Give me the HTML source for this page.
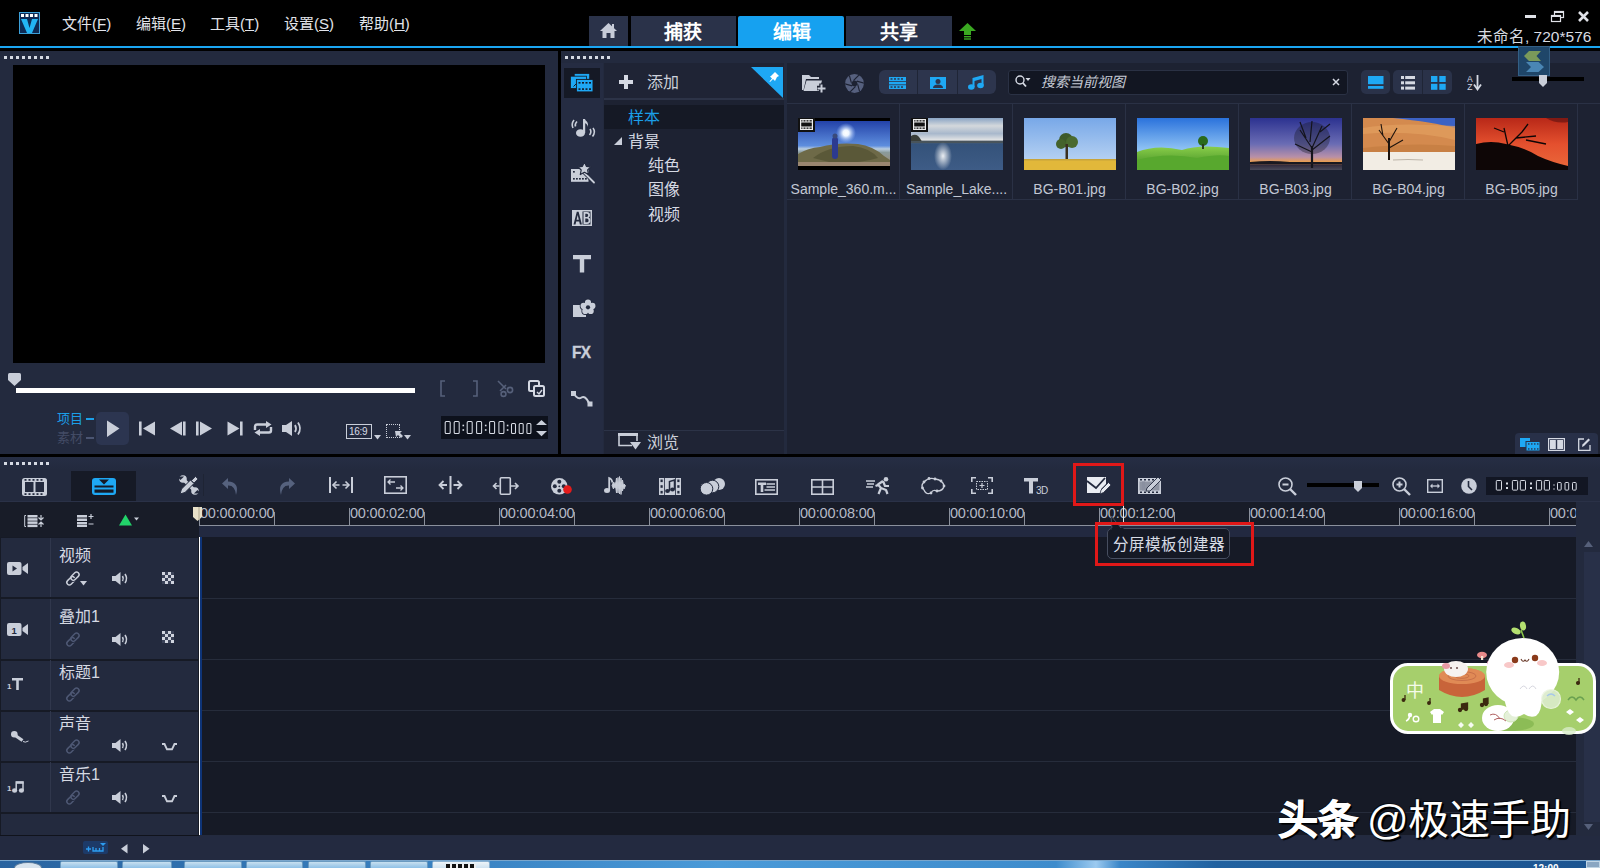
<!DOCTYPE html>
<html lang="zh-CN"><head><meta charset="utf-8">
<style>
*{margin:0;padding:0;box-sizing:border-box}
html,body{width:1600px;height:868px;overflow:hidden;background:#000;font-family:"Liberation Sans",sans-serif;color:#d5d9e4}
.a{position:absolute}
.t{position:absolute;white-space:nowrap;line-height:1}
svg{position:absolute;overflow:visible}
.ic{fill:#cdd2de}
</style></head><body>
<!-- ===== TOP BAR ===== -->
<div class="a" style="left:0;top:0;width:1600px;height:46px;background:#000"></div>
<!-- logo -->
<svg style="left:19px;top:12px" width="21" height="22" viewBox="0 0 21 22">
 <rect x="0.5" y="0.5" width="20" height="21" fill="#0d2a55" stroke="#3c9fd8" stroke-width="1"/>
 <rect x="2" y="2" width="3" height="3" fill="#fff"/><rect x="6.5" y="2" width="3" height="3" fill="#fff"/><rect x="11" y="2" width="3" height="3" fill="#fff"/><rect x="15.5" y="2" width="3" height="3" fill="#fff"/>
 <path d="M2 7 L8 7 L10.5 16 L13 7 L19 7 L13 21 L8 21 Z" fill="#22b4f4"/>
</svg>
<div class="t" style="left:62px;top:16px;font-size:15px;color:#e2e4ea">文件(<u>F</u>)</div>
<div class="t" style="left:136px;top:16px;font-size:15px;color:#e2e4ea">编辑(<u>E</u>)</div>
<div class="t" style="left:210px;top:16px;font-size:15px;color:#e2e4ea">工具(<u>T</u>)</div>
<div class="t" style="left:284px;top:16px;font-size:15px;color:#e2e4ea">设置(<u>S</u>)</div>
<div class="t" style="left:359px;top:16px;font-size:15px;color:#e2e4ea">帮助(<u>H</u>)</div>
<!-- tabs -->
<div class="a" style="left:589px;top:16px;width:39px;height:30px;background:#2a3249"></div>
<svg style="left:600px;top:23px" width="17" height="15" viewBox="0 0 17 15"><path d="M8.5 0 L17 8 L14.5 8 L14.5 15 L10.5 15 L10.5 10 L6.5 10 L6.5 15 L2.5 15 L2.5 8 L0 8 Z" fill="#c7ccd8"/><rect x="12" y="1" width="2" height="4" fill="#c7ccd8"/></svg>
<div class="a" style="left:631px;top:16px;width:105px;height:30px;background:#2a3249"></div>
<div class="t" style="left:664px;top:23px;font-size:19px;font-weight:bold;color:#fff">捕获</div>
<div class="a" style="left:738px;top:16px;width:106px;height:32px;background:#16a1f0;border-radius:2px 2px 0 0"></div>
<div class="t" style="left:773px;top:23px;font-size:19px;font-weight:bold;color:#fff">编辑</div>
<div class="a" style="left:846px;top:16px;width:106px;height:30px;background:#2a3249"></div>
<div class="t" style="left:880px;top:23px;font-size:19px;font-weight:bold;color:#fff">共享</div>
<svg style="left:959px;top:23px" width="17" height="17" viewBox="0 0 17 17"><path d="M8.5 0 L17 8 L12 8 L12 12 L5 12 L5 8 L0 8 Z" fill="#3aa821"/><rect x="5" y="13" width="7" height="1.4" fill="#3aa821"/><rect x="5" y="15.3" width="7" height="1.4" fill="#3aa821"/></svg>
<!-- window controls -->
<div class="a" style="left:1525px;top:15px;width:11px;height:3px;background:#e0e2e8"></div>
<svg style="left:1551px;top:11px" width="13" height="11" viewBox="0 0 13 11"><rect x="3.5" y="0.5" width="9" height="6" fill="none" stroke="#e0e2e8" stroke-width="1.2"/><rect x="3" y="0" width="10" height="2" fill="#e0e2e8"/><rect x="0.5" y="4.5" width="9" height="6" fill="#000" stroke="#e0e2e8" stroke-width="1.2"/><rect x="0" y="4" width="10" height="2" fill="#e0e2e8"/></svg>
<svg style="left:1578px;top:11px" width="11" height="11" viewBox="0 0 11 11"><path d="M1 1 L10 10 M10 1 L1 10" stroke="#e0e2e8" stroke-width="2.6"/></svg>
<div class="t" style="left:1477px;top:29px;font-size:15.5px;color:#d8dbe2">未命名, 720*576</div>
<div class="a" style="left:0;top:46px;width:1600px;height:2px;background:#1ba6f2"></div>

<!-- ===== PREVIEW PANEL ===== -->
<div class="a" style="left:0;top:51px;width:558px;height:403px;background:#232a3e"></div>
<div class="a" style="left:4px;top:56px;width:46px;height:3px;background:repeating-linear-gradient(90deg,#d6dae3 0 3px,transparent 3px 6px)"></div>
<div class="a" style="left:13px;top:65px;width:532px;height:298px;background:#000"></div>


<!-- scrubber -->
<svg style="left:8px;top:373px" width="13" height="13" viewBox="0 0 13 13"><path d="M1.5 0 H11.5 Q13 0 13 1.5 V7 L6.5 13 L0 7 V1.5 Q0 0 1.5 0 Z" fill="#c9ced9"/></svg>
<div class="a" style="left:16px;top:388px;width:399px;height:5px;background:#fff"></div>
<svg style="left:440px;top:380px" width="110" height="17" viewBox="0 0 110 17">
 <path d="M5 1 H1 V16 H5" fill="none" stroke="#56607a" stroke-width="1.6"/>
 <path d="M33 1 H37 V16 H33" fill="none" stroke="#56607a" stroke-width="1.6"/>
 <g fill="none" stroke="#56607a" stroke-width="1.6"><path d="M58 1 L66 9 M66 5 L60 11"/><circle cx="70" cy="10" r="2.6"/><circle cx="63.5" cy="14" r="2.4"/></g>
 <g fill="none" stroke="#d5d9e3" stroke-width="2"><rect x="89" y="1" width="10" height="10" rx="1.5"/><rect x="94" y="6" width="10" height="10" rx="1.5" fill="#232a3e"/></g>
 <path d="M97 12 L99 14 L102 10" stroke="#d5d9e3" stroke-width="1.4" fill="none"/>
</svg>
<!-- project/clip -->
<div class="t" style="left:57px;top:412px;font-size:13px;color:#1b9fe8">项目</div>
<div class="a" style="left:86px;top:418px;width:8px;height:2px;background:#1b9fe8"></div>
<div class="t" style="left:57px;top:431px;font-size:13px;color:#434c66">素材</div>
<div class="a" style="left:86px;top:437px;width:8px;height:2px;background:#4b5572"></div>
<div class="a" style="left:96px;top:412px;width:33px;height:33px;background:#2c3550;border-radius:5px"></div>
<svg style="left:96px;top:412px" width="240" height="33" viewBox="0 0 240 33">
 <path d="M11 8.5 L23.5 16.5 L11 25 Z" fill="#c9ced9"/>
 <rect x="43" y="9.5" width="2.6" height="14" fill="#c9ced9"/><path d="M59 9.5 V23.5 L47 16.5 Z" fill="#c9ced9"/>
 <path d="M86 9.5 V23.5 L74 16.5 Z" fill="#c9ced9"/><rect x="87" y="9.5" width="2.6" height="14" fill="#c9ced9"/>
 <rect x="100" y="9.5" width="2.6" height="14" fill="#c9ced9"/><path d="M104 9.5 V23.5 L116 16.5 Z" fill="#c9ced9"/>
 <path d="M131.5 9.5 V23.5 L143.5 16.5 Z" fill="#c9ced9"/><rect x="144" y="9.5" width="2.6" height="14" fill="#c9ced9"/>
 <g fill="none" stroke="#c9ced9" stroke-width="2.4"><path d="M159 18 V14.5 Q159 12.5 161 12.5 H172"/><path d="M175 15 V18.5 Q175 20.5 173 20.5 H162"/></g>
 <path d="M170 9 L175.5 12.5 L170 16 Z" fill="#c9ced9"/><path d="M164 17 L158.5 20.5 L164 24 Z" fill="#c9ced9"/>
 <path d="M186 13 H190 L196 9 V24 L190 20 H186 Z" fill="#c9ced9"/>
 <g fill="none" stroke="#c9ced9" stroke-width="1.8"><path d="M199 13 Q201 16.5 199 20"/><path d="M202 10.5 Q206 16.5 202 22.5"/></g>
</svg>
<!-- 16:9 -->
<div class="a" style="left:346px;top:424px;width:26px;height:15px;border:1.3px solid #c9ced9"></div>
<div class="t" style="left:349px;top:427px;font-size:10px;color:#d8dce5;letter-spacing:-0.3px">16:9</div>
<svg style="left:374px;top:435px" width="8" height="5"><path d="M0 0 H7 L3.5 4.5 Z" fill="#c9ced9"/></svg>
<div class="a" style="left:386px;top:424px;width:14px;height:14px;border:1.2px dotted #c9ced9"></div>
<svg style="left:394px;top:430px" width="9" height="10" viewBox="0 0 9 10"><path d="M1 1 L8 1 L6 3 L9 6 L7 8 L4 5 L2 7 Z" fill="#c9ced9"/></svg>
<svg style="left:404px;top:435px" width="8" height="5"><path d="M0 0 H7 L3.5 4.5 Z" fill="#c9ced9"/></svg>
<!-- timecode -->
<div class="a" style="left:441px;top:416px;width:107px;height:23px;background:#0d111c"></div>
<svg style="left:0;top:0" width="1600" height="868"><rect x="445.20" y="421.40" width="5.00" height="12.00" rx="1" fill="none" stroke="#d8dce5" stroke-width="1.05"/><rect x="454.20" y="421.40" width="5.00" height="12.00" rx="1" fill="none" stroke="#d8dce5" stroke-width="1.05"/><rect x="467.20" y="421.40" width="5.00" height="12.00" rx="1" fill="none" stroke="#d8dce5" stroke-width="1.05"/><rect x="476.60" y="421.40" width="5.00" height="12.00" rx="1" fill="none" stroke="#d8dce5" stroke-width="1.05"/><rect x="489.60" y="421.40" width="5.00" height="12.00" rx="1" fill="none" stroke="#d8dce5" stroke-width="1.05"/><rect x="498.90" y="421.40" width="5.00" height="12.00" rx="1" fill="none" stroke="#d8dce5" stroke-width="1.05"/><rect x="462.50" y="424.70" width="1.60" height="1.60" fill="#d8dce5"/><rect x="462.50" y="429.20" width="1.60" height="1.60" fill="#d8dce5"/><rect x="484.90" y="424.70" width="1.60" height="1.60" fill="#d8dce5"/><rect x="484.90" y="429.20" width="1.60" height="1.60" fill="#d8dce5"/><rect x="506.80" y="424.70" width="1.60" height="1.60" fill="#d8dce5"/><rect x="506.80" y="429.20" width="1.60" height="1.60" fill="#d8dce5"/><rect x="511.50" y="423.50" width="4.00" height="9.90" rx="1" fill="none" stroke="#d8dce5" stroke-width="1.05"/><rect x="519.20" y="423.50" width="4.00" height="9.90" rx="1" fill="none" stroke="#d8dce5" stroke-width="1.05"/><rect x="526.90" y="423.50" width="4.00" height="9.90" rx="1" fill="none" stroke="#d8dce5" stroke-width="1.05"/></svg>
<svg style="left:536px;top:420px" width="11" height="17" viewBox="0 0 11 17"><path d="M0 5 L5.5 0 L11 5 Z M0 11 H11 L5.5 16.3 Z" fill="#c9ced9"/></svg>

<!-- ===== LIBRARY PANEL ===== -->
<div class="a" style="left:561px;top:51px;width:1039px;height:403px;background:#232a3e"></div>
<div class="a" style="left:565px;top:56px;width:46px;height:3px;background:repeating-linear-gradient(90deg,#d6dae3 0 3px,transparent 3px 6px)"></div>


<div class="a" style="left:561px;top:63px;width:42px;height:391px;background:#252c42"></div>
<div class="a" style="left:564px;top:68px;width:36px;height:30px;background:#151925"></div>
<!-- library icon -->
<svg style="left:570px;top:73px" width="24" height="20" viewBox="0 0 24 20">
 <rect x="4.7" y="0.9" width="14.5" height="5" fill="#1ea8f4"/>
 <rect x="0.4" y="3.2" width="16" height="12.3" fill="#1ea8f4" stroke="#151925" stroke-width="0.8"/>
 <path d="M3.5 13.5 L6.5 10.5" stroke="#151925" stroke-width="1"/>
 <rect x="6.4" y="6.4" width="16.6" height="12.5" fill="#1ea8f4" stroke="#151925" stroke-width="0.9"/>
 <g fill="#151925"><rect x="8.5" y="9" width="2" height="1.6"/><rect x="12" y="9" width="2" height="1.6"/><rect x="15.5" y="9" width="2" height="1.6"/><rect x="19" y="9" width="2" height="1.6"/>
 <rect x="8.5" y="15.3" width="2" height="1.6"/><rect x="12" y="15.3" width="2" height="1.6"/><rect x="15.5" y="15.3" width="2" height="1.6"/><rect x="19" y="15.3" width="2" height="1.6"/></g>
</svg>
<!-- audio -->
<svg style="left:572px;top:118px" width="23" height="19" viewBox="0 0 23 19">
 <ellipse cx="8.5" cy="15" rx="4.5" ry="3.8" fill="#c9ced9"/><rect x="11" y="1" width="2.2" height="14" fill="#c9ced9"/><path d="M11 1 Q17 3 16 9 Q15 5 12 5 Z" fill="#c9ced9"/>
 <g fill="none" stroke="#c9ced9" stroke-width="1.6"><path d="M5 3.5 Q2.5 6 3.5 8.5"/><path d="M2 2 Q-1 6 1 10"/><path d="M18 11 Q20 14 17.5 17"/><path d="M21 10 Q24 14 20.5 18.5"/></g>
</svg>
<!-- magic film -->
<svg style="left:571px;top:162px" width="24" height="21" viewBox="0 0 24 21">
 <rect x="0" y="7" width="17.5" height="12.8" fill="#c9ced9"/>
 <g fill="#232a3e"><rect x="2" y="9" width="1.8" height="1.6"/><rect x="2" y="16" width="1.8" height="1.6"/><rect x="5" y="16" width="1.8" height="1.6"/><rect x="8" y="16" width="1.8" height="1.6"/><rect x="11" y="16" width="1.8" height="1.6"/><rect x="14" y="16" width="1.8" height="1.6"/></g>
 <path d="M12.5 10 L23 20.5" stroke="#232a3e" stroke-width="3.6"/>
 <path d="M12.5 10 L23 20.5" stroke="#c9ced9" stroke-width="1.8" stroke-linecap="round"/>
 <path d="M13.4 0 L15.4 4.3 L20 4.8 L16.6 8 L17.5 12.5 L13.4 10.3 L9.3 12.5 L10.2 8 L6.8 4.8 L11.4 4.3 Z" fill="#c9ced9" stroke="#232a3e" stroke-width="1.2" stroke-linejoin="round"/>
</svg>
<!-- AB -->
<svg style="left:572px;top:210px" width="20" height="16" viewBox="0 0 20 16">
 <rect x="0" y="0" width="20" height="16" fill="#c9ced9"/>
 <rect x="10.5" y="1.5" width="8" height="13" fill="#232a3e"/>
 <path d="M1.5 14.5 L4.8 1.8 H6.6 L9.9 14.5 H7.9 L7.2 11.5 H4.2 L3.5 14.5 Z M4.6 9.8 H6.8 L5.7 5 Z" fill="#232a3e" fill-rule="evenodd"/>
 <path d="M11.5 2 H15 Q18 2 18 5.2 Q18 7 16.6 7.6 Q18.4 8.3 18.4 10.6 Q18.4 14 15 14 H11.5 Z M13.3 3.7 V6.9 H14.8 Q16.2 6.9 16.2 5.3 Q16.2 3.7 14.8 3.7 Z M13.3 8.5 V12.3 H15 Q16.6 12.3 16.6 10.4 Q16.6 8.5 15 8.5 Z" fill="#c9ced9" fill-rule="evenodd"/>
</svg>
<!-- T -->
<svg style="left:573px;top:255px" width="18" height="18" viewBox="0 0 18 18"><path d="M0 0 H18 V4.2 H11.2 V17.5 H6.8 V4.2 H0 Z" fill="#c9ced9"/></svg>
<!-- flower box -->
<svg style="left:573px;top:299px" width="24" height="19" viewBox="0 0 24 19">
 <rect x="0" y="6" width="13" height="12" fill="#c9ced9"/>
 <circle cx="15.00" cy="3.70" r="3.9" fill="#232a3e"/><circle cx="19.37" cy="6.88" r="3.9" fill="#232a3e"/><circle cx="17.70" cy="12.02" r="3.9" fill="#232a3e"/><circle cx="12.30" cy="12.02" r="3.9" fill="#232a3e"/><circle cx="10.63" cy="6.88" r="3.9" fill="#232a3e"/><circle cx="15" cy="8.3" r="5" fill="#232a3e"/>
 <circle cx="15.00" cy="3.70" r="3.1" fill="#c9ced9"/><circle cx="19.37" cy="6.88" r="3.1" fill="#c9ced9"/><circle cx="17.70" cy="12.02" r="3.1" fill="#c9ced9"/><circle cx="12.30" cy="12.02" r="3.1" fill="#c9ced9"/><circle cx="10.63" cy="6.88" r="3.1" fill="#c9ced9"/><circle cx="15" cy="8.3" r="4" fill="#c9ced9"/>
 <circle cx="15" cy="8.3" r="2.1" fill="#232a3e"/>
</svg>
<div class="t" style="left:572px;top:344px;font-size:17px;font-weight:bold;color:#c9ced9;letter-spacing:-0.8px;transform:scaleX(0.9);transform-origin:left top;-webkit-text-stroke:0.4px #c9ced9">FX</div>
<svg style="left:571px;top:391px" width="22" height="16" viewBox="0 0 22 16">
 <rect x="0" y="0" width="5" height="5" fill="#c9ced9"/><rect x="16.5" y="10.5" width="5" height="5" fill="#c9ced9"/>
 <path d="M3 3 Q7 9 10.5 6.5 Q14 4 18 12" fill="none" stroke="#c9ced9" stroke-width="2"/>
</svg>

<!-- tree panel -->
<div class="a" style="left:604px;top:63px;width:180px;height:391px;background:#1d2232"></div>
<div class="a" style="left:604px;top:63px;width:180px;height:35px;background:#1f2435"></div>
<div class="a" style="left:604px;top:98px;width:180px;height:2px;background:#2c3347"></div>
<svg style="left:619px;top:75px" width="14" height="14" viewBox="0 0 14 14"><path d="M5 0 H9 V5 H14 V9 H9 V14 H5 V9 H0 V5 H5 Z" fill="#d5d9e3"/></svg>
<div class="t" style="left:647px;top:75px;font-size:16px;color:#ccd0da">添加</div>
<svg style="left:751px;top:67px" width="33" height="31" viewBox="0 0 33 31"><path d="M0 0 H32 V31 Z" fill="#1ea8f4"/><path d="M20 9 L24 5 L28 9 L26 10 L24 14 L22 12 L19 15 L18.5 14.5 L21 11.5 L19 9.5 Z" fill="#fff"/></svg>
<div class="a" style="left:604px;top:105px;width:180px;height:24px;background:#151925"></div>
<div class="t" style="left:628px;top:110px;font-size:16px;color:#1b9fe8">样本</div>
<svg style="left:614px;top:137px" width="9" height="9"><path d="M8 0 V8 H0 Z" fill="#c9ced9"/></svg>
<div class="t" style="left:628px;top:134px;font-size:16px;color:#d5d9e3">背景</div>
<div class="t" style="left:648px;top:158px;font-size:16px;color:#d5d9e3">纯色</div>
<div class="t" style="left:648px;top:182px;font-size:16px;color:#d5d9e3">图像</div>
<div class="t" style="left:648px;top:207px;font-size:16px;color:#d5d9e3">视频</div>
<div class="a" style="left:604px;top:430px;width:180px;height:24px;background:#1f2435;border-top:1px solid #2c3347"></div>
<svg style="left:618px;top:433px" width="23" height="17" viewBox="0 0 23 17"><path d="M14 12.5 H1 V1 H19 V8" fill="none" stroke="#c9ced9" stroke-width="1.6"/><rect x="0" y="0" width="20" height="3" fill="#c9ced9"/><path d="M12 9 H23 L17.5 16.5 Z" fill="#c9ced9"/></svg>
<div class="t" style="left:647px;top:435px;font-size:16px;color:#ccd0da">浏览</div>
<div class="a" style="left:784px;top:63px;width:3px;height:391px;background:#232a3e"></div>

<!-- content area -->
<div class="a" style="left:787px;top:63px;width:813px;height:391px;background:#1d2232"></div>
<div class="a" style="left:787px;top:103px;width:813px;height:1px;background:#2a3145"></div>


<!-- lib toolbar -->
<svg style="left:802px;top:74px" width="24" height="19" viewBox="0 0 24 19">
 <path d="M0 1 H7 L9 3 H17 V5 H4 L1.5 16 H0 Z" fill="#c9ced9"/>
 <path d="M4.5 6.5 H20 L17 17 H1.5 Z" fill="#c9ced9"/>
 <path d="M19.5 9.5 V18.5 M15 14 H24" stroke="#1d2232" stroke-width="4.5"/>
 <path d="M19.5 10.5 V18.5 M15.5 14.5 H23.5" stroke="#c9ced9" stroke-width="2"/>
</svg>
<svg style="left:845px;top:74px" width="19" height="19" viewBox="0 0 18.4 18.4"><defs><clipPath id="apc"><circle cx="9.2" cy="9.2" r="9.1"/></clipPath></defs><circle cx="9.2" cy="9.2" r="9.1" fill="#56607e"/><g clip-path="url(#apc)"><path d="M12.29 10.03 L14.62 18.72 M10.03 12.29 L3.66 18.65 M6.94 11.46 L-1.76 9.13 M6.11 8.37 L3.78 -0.32 M8.37 6.11 L14.74 -0.25 M11.46 6.94 L20.16 9.27 " stroke="#1d2232" stroke-width="1.1"/></g><path d="M12.29 10.03 L10.03 12.29 L6.94 11.46 L6.11 8.37 L8.37 6.11 L11.46 6.94 Z" fill="#1d2232"/></svg>
<div class="a" style="left:879px;top:70px;width:117px;height:24px;background:#2d354d;border-radius:6px"></div>
<div class="a" style="left:917px;top:70px;width:1px;height:24px;background:#1f2536"></div>
<div class="a" style="left:957px;top:70px;width:1px;height:24px;background:#1f2536"></div>
<svg style="left:889px;top:77px" width="17" height="12" viewBox="0 0 17 12"><rect width="17" height="12" fill="#1ea8f4"/><g fill="#2d354d"><rect x="1.5" y="1.2" width="2" height="1.5"/><rect x="5" y="1.2" width="2" height="1.5"/><rect x="8.5" y="1.2" width="2" height="1.5"/><rect x="12" y="1.2" width="2" height="1.5"/><rect x="1.5" y="9.3" width="2" height="1.5"/><rect x="5" y="9.3" width="2" height="1.5"/><rect x="8.5" y="9.3" width="2" height="1.5"/><rect x="12" y="9.3" width="2" height="1.5"/><rect x="0" y="4" width="17" height="0.8"/><rect x="0" y="7.4" width="17" height="0.8"/></g></svg>
<svg style="left:930px;top:77px" width="16" height="12" viewBox="0 0 16 12"><rect width="16" height="12" fill="#1ea8f4"/><circle cx="8" cy="4.5" r="2.5" fill="#2d354d"/><path d="M3 11 Q3 7.5 8 7.5 Q13 7.5 13 11 Z" fill="#2d354d"/></svg>
<svg style="left:968px;top:75px" width="16" height="15" viewBox="0 0 16 15"><ellipse cx="3.3" cy="12" rx="3.3" ry="2.8" fill="#1ea8f4"/><ellipse cx="12.5" cy="10.5" rx="3.3" ry="2.8" fill="#1ea8f4"/><path d="M4.5 12 V3 L15.5 0 V10.5 H13.5 V4 L6.5 6 V12 Z" fill="#1ea8f4"/></svg>
<!-- search -->
<div class="a" style="left:1008px;top:70px;width:340px;height:25px;background:#121622;border:1px solid #2a3144;border-radius:3px"></div>
<svg style="left:1015px;top:75px" width="16" height="14" viewBox="0 0 16 14"><circle cx="5" cy="5" r="4" fill="none" stroke="#d5d9e3" stroke-width="1.4"/><path d="M7.8 7.8 L11 11.5" stroke="#d5d9e3" stroke-width="1.8"/><path d="M10.5 3 H15.5 L13 6 Z" fill="#d5d9e3"/></svg>
<div class="t" style="left:1041px;top:75px;font-size:14px;font-style:italic;color:#c4c9d4">搜索当前视图</div>
<svg style="left:1332px;top:78px" width="8" height="8" viewBox="0 0 8 8"><path d="M1 1 L7 7 M7 1 L1 7" stroke="#d5d9e3" stroke-width="1.5"/></svg>
<!-- view buttons -->
<div class="a" style="left:1361px;top:70px;width:29px;height:24px;background:#2a3249;border-radius:5px"></div>
<svg style="left:1368px;top:76px" width="16" height="13" viewBox="0 0 16 13"><rect x="0" y="0" width="15.5" height="8.2" fill="#1ea8f4"/><rect x="0" y="10" width="15.5" height="2.8" fill="#1ea8f4"/></svg>
<div class="a" style="left:1393px;top:70px;width:59px;height:24px;background:#2a3249;border-radius:5px"></div>
<div class="a" style="left:1422px;top:70px;width:1px;height:24px;background:#1f2536"></div>
<svg style="left:1401px;top:76px" width="14" height="14" viewBox="0 0 14 14"><g fill="#d5d9e3"><rect x="0" y="0" width="3" height="3"/><rect x="4.2" y="0" width="9.8" height="3"/><rect x="0" y="5.3" width="3" height="3"/><rect x="4.2" y="5.3" width="9.8" height="3"/><rect x="0" y="10.6" width="3" height="3"/><rect x="4.2" y="10.6" width="9.8" height="3"/></g></svg>
<svg style="left:1431px;top:76px" width="15" height="14" viewBox="0 0 15 14"><g fill="#1ea8f4"><rect x="0" y="0" width="6.4" height="6"/><rect x="8.3" y="0" width="6.4" height="6"/><rect x="0" y="7.8" width="6.4" height="6"/><rect x="8.3" y="7.8" width="6.4" height="6"/></g></svg>
<svg style="left:1467px;top:75px" width="15" height="15" viewBox="0 0 15 15"><text x="0" y="7" font-family="Liberation Sans" font-size="8.5" fill="#d5d9e3">A</text><text x="0.3" y="14.8" font-family="Liberation Sans" font-size="8.5" fill="#d5d9e3">Z</text><path d="M10.5 0 V13" stroke="#d5d9e3" stroke-width="1.8"/><path d="M7 9.5 L10.5 14.5 L14 9.5" fill="none" stroke="#d5d9e3" stroke-width="1.8"/></svg>
<div class="a" style="left:1512px;top:77px;width:72px;height:4px;background:#000"></div>
<div class="a" style="left:1518px;top:46px;width:32px;height:30px;background:#1f4669;border:1px solid #335f85"></div>
<svg style="left:1523px;top:51px" width="23" height="21" viewBox="0 0 23 21"><path d="M6 0 H18 L13.5 5 L18 10 H6 L1 5 Z" fill="#7a9a5a"/><path d="M3 11 H15.5 L21 16 L15.5 21 H3 L8 16 Z" fill="#4a86b4"/></svg>
<svg style="left:1539px;top:75px" width="8" height="12" viewBox="0 0 8 12"><path d="M0 0 H8 V8 L4 12 L0 8 Z" fill="#c9ced9"/></svg>
<div class="a" style="left:787px;top:104px;width:791px;height:96px;border-bottom:1px solid #2a3145"></div>
<div class="a" style="left:787px;top:104px;width:113px;height:96px;border-right:1px solid #2a3145"></div>
<div class="a" style="left:798px;top:118px;width:92px;height:52px;overflow:hidden"><svg style="left:0;top:0" width="92" height="52" viewBox="0 0 92 52"><defs><linearGradient id="g1" x1="0" y1="0" x2="0" y2="1"><stop offset="0" stop-color="#2342a8"/><stop offset="0.55" stop-color="#5e8ede"/><stop offset="0.62" stop-color="#b8cce0"/><stop offset="0.7" stop-color="#8a9a9a"/><stop offset="1" stop-color="#a08a74"/></linearGradient>
<radialGradient id="sun1"><stop offset="0" stop-color="#fff"/><stop offset="0.3" stop-color="#eef6ff"/><stop offset="1" stop-color="#9cc0ff" stop-opacity="0"/></radialGradient></defs>
<rect width="92" height="52" fill="#000"/><rect x="0" y="3" width="92" height="45" fill="url(#g1)"/>
<circle cx="48" cy="15" r="10" fill="url(#sun1)"/>
<path d="M0 36 Q10 30 22 29 Q40 24 60 26 Q75 28 86 38 L92 42 V48 H0 Z" fill="#6e6a48"/>
<path d="M15 40 Q30 28 55 28 Q72 30 80 40 Q60 46 35 45 Z" fill="#5a5838"/>
<path d="M0 44 H92 V48 H0 Z" fill="#9a8670"/>
<rect x="34" y="19" width="6" height="22" rx="3" fill="#2c3a90"/><circle cx="37" cy="18" r="2.5" fill="#3a4a7a"/></svg><div class="a" style="left:0;top:0;width:17px;height:14px;background:#111"></div><svg style="left:2px;top:1px" width="13" height="11" viewBox="0 0 13 11"><rect x="0.6" y="0.6" width="11.8" height="9.8" fill="none" stroke="#eee" stroke-width="1.2"/><path d="M0 3 H13 M0 8 H13" stroke="#eee" stroke-width="1"/><g fill="#eee"><rect x="2.5" y="1" width="1" height="2"/><rect x="5.5" y="1" width="1" height="2"/><rect x="8.5" y="1" width="1" height="2"/><rect x="2.5" y="8" width="1" height="2"/><rect x="5.5" y="8" width="1" height="2"/><rect x="8.5" y="8" width="1" height="2"/></g></svg></div>
<div class="t" style="left:787px;top:182px;width:113px;text-align:center;font-size:14px;color:#c2c8d4">Sample_360.m...</div>
<div class="a" style="left:900px;top:104px;width:113px;height:96px;border-right:1px solid #2a3145"></div>
<div class="a" style="left:911px;top:118px;width:92px;height:52px;overflow:hidden"><svg style="left:0;top:0" width="92" height="52" viewBox="0 0 92 52"><defs><linearGradient id="g2" x1="0" y1="0" x2="0" y2="1"><stop offset="0" stop-color="#8aa4c4"/><stop offset="0.15" stop-color="#d4d8dc"/><stop offset="0.3" stop-color="#a8b8cc"/><stop offset="0.42" stop-color="#e0e2e4"/><stop offset="0.45" stop-color="#5a6670"/><stop offset="0.5" stop-color="#34527a"/><stop offset="1" stop-color="#3e5c86"/></linearGradient>
<radialGradient id="sp2"><stop offset="0" stop-color="#fff" stop-opacity="0.9"/><stop offset="1" stop-color="#fff" stop-opacity="0"/></radialGradient></defs>
<rect width="92" height="52" fill="url(#g2)"/>
<path d="M0 18 Q6 14 10 22 L12 25 H0 Z" fill="#3a3e38"/>
<path d="M0 23 H92 V25 H0 Z" fill="#48545c"/>
<ellipse cx="32" cy="38" rx="9" ry="14" fill="url(#sp2)"/>
</svg><div class="a" style="left:0;top:0;width:17px;height:14px;background:#111"></div><svg style="left:2px;top:1px" width="13" height="11" viewBox="0 0 13 11"><rect x="0.6" y="0.6" width="11.8" height="9.8" fill="none" stroke="#eee" stroke-width="1.2"/><path d="M0 3 H13 M0 8 H13" stroke="#eee" stroke-width="1"/><g fill="#eee"><rect x="2.5" y="1" width="1" height="2"/><rect x="5.5" y="1" width="1" height="2"/><rect x="8.5" y="1" width="1" height="2"/><rect x="2.5" y="8" width="1" height="2"/><rect x="5.5" y="8" width="1" height="2"/><rect x="8.5" y="8" width="1" height="2"/></g></svg></div>
<div class="t" style="left:900px;top:182px;width:113px;text-align:center;font-size:14px;color:#c2c8d4">Sample_Lake....</div>
<div class="a" style="left:1013px;top:104px;width:113px;height:96px;border-right:1px solid #2a3145"></div>
<div class="a" style="left:1024px;top:118px;width:92px;height:52px;overflow:hidden"><svg style="left:0;top:0" width="92" height="52" viewBox="0 0 92 52"><defs><linearGradient id="g3" x1="0" y1="0" x2="0" y2="1"><stop offset="0" stop-color="#78a8e8"/><stop offset="0.8" stop-color="#b4d0f2"/></linearGradient></defs>
<rect width="92" height="52" fill="url(#g3)"/><rect x="0" y="41" width="92" height="11" fill="#e2b83a"/><rect x="0" y="41" width="92" height="1.5" fill="#c8a43a"/>
<circle cx="42" cy="22" r="7" fill="#3d5a2a"/><circle cx="48" cy="24" r="6" fill="#4a6a30"/><circle cx="37" cy="26" r="5" fill="#44622c"/>
<rect x="41.5" y="26" width="2.5" height="15" fill="#3a2e20"/></svg></div>
<div class="t" style="left:1013px;top:182px;width:113px;text-align:center;font-size:14px;color:#c2c8d4">BG-B01.jpg</div>
<div class="a" style="left:1126px;top:104px;width:113px;height:96px;border-right:1px solid #2a3145"></div>
<div class="a" style="left:1137px;top:118px;width:92px;height:52px;overflow:hidden"><svg style="left:0;top:0" width="92" height="52" viewBox="0 0 92 52"><defs><linearGradient id="g4" x1="0" y1="0" x2="0" y2="1"><stop offset="0" stop-color="#2a72dc"/><stop offset="0.6" stop-color="#8ec2f4"/></linearGradient><linearGradient id="h4" x1="0" y1="0" x2="0" y2="1"><stop offset="0" stop-color="#8ace4a"/><stop offset="1" stop-color="#3c8a22"/></linearGradient></defs>
<rect width="92" height="52" fill="url(#g4)"/>
<path d="M0 34 Q20 26 45 32 Q62 26 92 30 V52 H0 Z" fill="url(#h4)"/>
<path d="M0 42 Q30 34 60 40 Q80 36 92 38 V52 H0 Z" fill="#58a82e"/>
<circle cx="66" cy="23" r="5" fill="#2a6a1a"/><rect x="65" y="26" width="2" height="5" fill="#2a3a18"/></svg></div>
<div class="t" style="left:1126px;top:182px;width:113px;text-align:center;font-size:14px;color:#c2c8d4">BG-B02.jpg</div>
<div class="a" style="left:1239px;top:104px;width:113px;height:96px;border-right:1px solid #2a3145"></div>
<div class="a" style="left:1250px;top:118px;width:92px;height:52px;overflow:hidden"><svg style="left:0;top:0" width="92" height="52" viewBox="0 0 92 52"><defs><linearGradient id="g5" x1="0" y1="0" x2="0" y2="1"><stop offset="0" stop-color="#2c3290"/><stop offset="0.5" stop-color="#6a6cb4"/><stop offset="0.75" stop-color="#b890a8"/><stop offset="0.86" stop-color="#f4a040"/><stop offset="0.9" stop-color="#30283a"/><stop offset="1" stop-color="#4a4a5a"/></linearGradient></defs>
<rect width="92" height="52" fill="url(#g5)"/>
<g stroke="#14141c" fill="none"><path d="M62 50 V28" stroke-width="2.2"/><path d="M62 30 L50 12 M62 30 L72 8 M62 34 L45 26 M62 32 L80 18 M56 20 L50 4 M70 14 L80 6 M60 24 L62 3" stroke-width="1.2"/></g>
<ellipse cx="62" cy="20" rx="18" ry="16" fill="#14141c" opacity="0.35"/>
<path d="M0 44 Q20 42 40 44 H92 V46 H0 Z" fill="#1a1820"/></svg></div>
<div class="t" style="left:1239px;top:182px;width:113px;text-align:center;font-size:14px;color:#c2c8d4">BG-B03.jpg</div>
<div class="a" style="left:1352px;top:104px;width:113px;height:96px;border-right:1px solid #2a3145"></div>
<div class="a" style="left:1363px;top:118px;width:92px;height:52px;overflow:hidden"><svg style="left:0;top:0" width="92" height="52" viewBox="0 0 92 52"><rect width="92" height="52" fill="#d48a4e"/>
<path d="M30 0 H92 V10 Q70 4 30 0 Z" fill="#3c62c4"/>
<path d="M0 10 Q30 4 92 8 V22 Q50 12 0 16 Z" fill="#e2a060" opacity="0.7"/>
<path d="M0 30 Q50 24 92 28 V34 H0 Z" fill="#c88044"/>
<rect x="0" y="34" width="92" height="18" fill="#f2ede4"/>
<g stroke="#1e140e" fill="none"><path d="M26 42 V20" stroke-width="2"/><path d="M26 26 L16 12 M26 24 L34 10 M26 30 L40 22 M20 18 L18 6" stroke-width="1.1"/></g>
<path d="M30 42 Q45 41 60 42" stroke="#bdb5a8" stroke-width="1" fill="none"/></svg></div>
<div class="t" style="left:1352px;top:182px;width:113px;text-align:center;font-size:14px;color:#c2c8d4">BG-B04.jpg</div>
<div class="a" style="left:1465px;top:104px;width:113px;height:96px;border-right:1px solid #2a3145"></div>
<div class="a" style="left:1476px;top:118px;width:92px;height:52px;overflow:hidden"><svg style="left:0;top:0" width="92" height="52" viewBox="0 0 92 52"><defs><linearGradient id="g7" x1="0" y1="0" x2="0" y2="1"><stop offset="0" stop-color="#b82818"/><stop offset="0.5" stop-color="#e4502e"/><stop offset="1" stop-color="#ea6a3c"/></linearGradient></defs>
<rect width="92" height="52" fill="url(#g7)"/>
<path d="M0 26 Q15 22 30 26 Q50 30 62 38 Q75 44 92 48 V52 H0 Z" fill="#0e0606"/>
<g stroke="#0e0606" fill="none" stroke-width="1.3"><path d="M32 28 L28 10 M32 28 L46 14 M40 20 L60 18 M46 14 L52 6 M28 14 L18 10 M50 22 L70 26"/></g>
<path d="M70 0 Q80 6 92 4 V0 Z" fill="#5a1010" opacity="0.6"/></svg></div>
<div class="t" style="left:1465px;top:182px;width:113px;text-align:center;font-size:14px;color:#c2c8d4">BG-B05.jpg</div>

<div class="a" style="left:1515px;top:433px;width:83px;height:21px;background:#283048;border-radius:4px 4px 0 0"></div>
<svg style="left:1520px;top:438px" width="20" height="13" viewBox="0 0 20 13"><rect x="0" y="0" width="10" height="9" fill="#1ea8f4"/><rect x="6" y="3.5" width="14" height="9.5" fill="#1ea8f4" stroke="#283048" stroke-width="1"/><g fill="#283048"><rect x="8" y="5.3" width="1.5" height="1.3"/><rect x="11" y="5.3" width="1.5" height="1.3"/><rect x="14" y="5.3" width="1.5" height="1.3"/><rect x="17" y="5.3" width="1.5" height="1.3"/><rect x="8" y="10.3" width="1.5" height="1.3"/><rect x="11" y="10.3" width="1.5" height="1.3"/><rect x="14" y="10.3" width="1.5" height="1.3"/><rect x="17" y="10.3" width="1.5" height="1.3"/></g></svg>
<svg style="left:1548px;top:438px" width="17" height="13" viewBox="0 0 17 13"><rect x="0.6" y="0.6" width="15.8" height="11.8" fill="none" stroke="#d5d9e3" stroke-width="1.2"/><rect x="2" y="2" width="5.8" height="9" fill="#d5d9e3"/><rect x="9.2" y="2" width="5.8" height="9" fill="#d5d9e3"/></svg>
<svg style="left:1578px;top:437px" width="13" height="14" viewBox="0 0 13 14"><path d="M6 2 H0.7 V13.3 H12 V8" fill="none" stroke="#d5d9e3" stroke-width="1.3"/><path d="M4 10 L4.5 7.5 L10.5 1.5 L12 3 L6 9 Z" fill="#d5d9e3"/></svg>

<!-- ===== TIMELINE PANEL ===== -->
<div class="a" style="left:0;top:457px;width:1600px;height:401px;background:#232a3e"></div>
<div class="a" style="left:0;top:457px;width:1600px;height:12px;background:linear-gradient(180deg,#262e44,#232a3e)"></div>
<div class="a" style="left:4px;top:462px;width:46px;height:3px;background:repeating-linear-gradient(90deg,#d6dae3 0 3px,transparent 3px 6px)"></div>


<!-- timeline toolbar -->
<svg style="left:22px;top:478px" width="25" height="18" viewBox="0 0 25 18">
 <rect x="0" y="0" width="25" height="18" rx="2.5" fill="#c9ced9"/>
 <rect x="3" y="4" width="8.5" height="10" fill="#232a3e"/><rect x="13.5" y="4" width="8.5" height="10" fill="#232a3e"/>
 <g fill="#232a3e"><rect x="2.5" y="1" width="2" height="1.8"/><rect x="6.5" y="1" width="2" height="1.8"/><rect x="10.5" y="1" width="2" height="1.8"/><rect x="14.5" y="1" width="2" height="1.8"/><rect x="18.5" y="1" width="2" height="1.8"/>
 <rect x="2.5" y="15.2" width="2" height="1.8"/><rect x="6.5" y="15.2" width="2" height="1.8"/><rect x="10.5" y="15.2" width="2" height="1.8"/><rect x="14.5" y="15.2" width="2" height="1.8"/><rect x="18.5" y="15.2" width="2" height="1.8"/></g>
</svg>
<div class="a" style="left:71px;top:471px;width:65px;height:30px;background:#161a26"></div>
<svg style="left:92px;top:478px" width="24" height="17" viewBox="0 0 24 17">
 <rect x="0" y="0" width="24" height="17" rx="3" fill="#1ea8f4"/>
 <rect x="2.5" y="7.5" width="19" height="2" fill="#161a26"/>
 <path d="M7 1.5 H17 L12 6.5 Z" fill="#161a26"/>
 <rect x="2.5" y="11.5" width="19" height="3.2" fill="#161a26"/>
</svg>
<svg style="left:179px;top:475px" width="20" height="20" viewBox="0 0 20 20">
 <path d="M5 5 L15 15" stroke="#c9ced9" stroke-width="3.4"/>
 <circle cx="4" cy="4" r="3.8" fill="#c9ced9"/><path d="M4 -1 L9 4 L4 4 Z" fill="#232a3e" transform="rotate(-45 4 4) translate(-2.5 -1)"/>
 <circle cx="16" cy="16" r="3.8" fill="#c9ced9"/><path d="M16 21 L11 16 L16 16 Z" fill="#232a3e" transform="rotate(-45 16 16) translate(2.5 1)"/>
 <path d="M1 19 L2.5 14 L11.5 5 L15 8.5 L6 17.5 Z" fill="#c9ced9" stroke="#232a3e" stroke-width="1"/>
 <path d="M12.5 5.5 L16.5 1.5 L19 4 L15 8 Z" fill="#c9ced9" stroke="#232a3e" stroke-width="0.8"/>
</svg>
<div class="a" style="left:203px;top:474px;width:1px;height:22px;background:#1e2434"></div>
<svg style="left:222px;top:478px" width="18" height="17" viewBox="0 0 18 17"><path d="M6 0 L0 5.5 L6 11 V7.5 Q13 7 14 17 Q18 4 6 3.5 Z" fill="#56627e"/></svg>
<svg style="left:277px;top:478px" width="18" height="17" viewBox="0 0 18 17"><path d="M12 0 L18 5.5 L12 11 V7.5 Q5 7 4 17 Q0 4 12 3.5 Z" fill="#56627e"/></svg>
<svg style="left:329px;top:477px" width="24" height="16" viewBox="0 0 24 16"><rect x="0" y="0" width="2" height="16" fill="#c9ced9"/><rect x="22" y="0" width="2" height="16" fill="#c9ced9"/><path d="M4 8 H10.5 M13.5 8 H20" stroke="#c9ced9" stroke-width="1.6"/><path d="M7.5 4.5 L4 8 L7.5 11.5 M16.5 4.5 L20 8 L16.5 11.5" fill="none" stroke="#c9ced9" stroke-width="1.6"/></svg>
<svg style="left:384px;top:476px" width="23" height="18" viewBox="0 0 23 18"><rect x="0.8" y="0.8" width="21.4" height="16.4" fill="none" stroke="#c9ced9" stroke-width="1.6"/><path d="M4 6 H11 M6.5 3.5 L4 6 L6.5 8.5 M12 12 H19 M16.5 9.5 L19 12 L16.5 14.5" fill="none" stroke="#c9ced9" stroke-width="1.3"/></svg>
<svg style="left:438px;top:476px" width="25" height="18" viewBox="0 0 25 18"><rect x="11.5" y="0" width="2" height="18" fill="#c9ced9"/><path d="M1.5 9 H9 M5.5 5 L1.5 9 L5.5 13 M15.5 9 H23.5 M19.5 5 L23.5 9 L19.5 13" fill="none" stroke="#c9ced9" stroke-width="1.8"/></svg>
<svg style="left:492px;top:477px" width="27" height="18" viewBox="0 0 27 18"><rect x="8.3" y="0.8" width="10" height="16.4" rx="1" fill="none" stroke="#c9ced9" stroke-width="1.6"/><path d="M1 9 H7.5 M4.5 6 L1.5 9 L4.5 12 M19 9 H26 M23 6 L26 9 L23 12" fill="none" stroke="#c9ced9" stroke-width="1.6"/></svg>
<svg style="left:551px;top:478px" width="22" height="17" viewBox="0 0 22 17"><circle cx="8.3" cy="8.3" r="8.3" fill="#c9ced9"/><g fill="#232a3e"><circle cx="8.3" cy="3.8" r="2"/><circle cx="3.8" cy="8.3" r="2"/><circle cx="12.8" cy="8.3" r="2"/><circle cx="8.3" cy="12.8" r="2"/><circle cx="8.3" cy="8.3" r="0.9"/></g><circle cx="16.5" cy="11.5" r="4.3" fill="#e41b1b"/></svg>
<svg style="left:604px;top:476px" width="22" height="19" viewBox="0 0 22 19"><ellipse cx="3" cy="14.5" rx="3" ry="2.5" fill="#c9ced9"/><path d="M5.2 14.5 V2 Q8 3 8.5 6.5" fill="none" stroke="#c9ced9" stroke-width="1.8"/><path d="M8 9.5 L9.5 6 L11 12 L12.5 2 L14 17 L15.5 0.5 L17 18.5 L18.5 4 L20 13 L21.5 9.5 L20 8 L18.5 15 L17 2 L15.5 18 L14 1.5 L12.5 17 L11 6.5 L9.5 13 Z" fill="#c9ced9" stroke="#c9ced9" stroke-width="0.9" stroke-linejoin="round"/></svg>
<svg style="left:659px;top:478px" width="22" height="17" viewBox="0 0 22 17"><rect x="0" y="0" width="22" height="17" fill="#c9ced9"/><g fill="#232a3e"><rect x="1.5" y="1.5" width="2.2" height="2.6"/><rect x="1.5" y="7.2" width="2.2" height="2.6"/><rect x="1.5" y="12.9" width="2.2" height="2.6"/><rect x="18.3" y="1.5" width="2.2" height="2.6"/><rect x="18.3" y="7.2" width="2.2" height="2.6"/><rect x="18.3" y="12.9" width="2.2" height="2.6"/><rect x="5" y="0" width="0.8" height="17"/><rect x="16.2" y="0" width="0.8" height="17"/></g><ellipse cx="8.5" cy="13" rx="2.4" ry="2" fill="#232a3e"/><ellipse cx="13.5" cy="11.5" rx="2.4" ry="2" fill="#232a3e"/><path d="M10.5 13 V3.5 L15.5 2 V11.5" fill="none" stroke="#232a3e" stroke-width="1.5"/></svg>
<svg style="left:700px;top:478px" width="25" height="17" viewBox="0 0 25 17"><circle cx="19" cy="6" r="6" fill="#c9ced9"/><circle cx="12.5" cy="8.5" r="6.3" fill="#c9ced9" stroke="#232a3e" stroke-width="1"/><circle cx="6.5" cy="10.8" r="6.3" fill="#c9ced9" stroke="#232a3e" stroke-width="1"/></svg>
<svg style="left:755px;top:479px" width="23" height="16" viewBox="0 0 23 16"><rect x="0" y="0" width="23" height="16" fill="#c9ced9"/><rect x="1.6" y="1.6" width="19.8" height="12.8" fill="#232a3e"/><path d="M3 3.5 H11 V6 H8.3 V13 H5.7 V6 H3 Z" fill="#c9ced9"/><path d="M11.5 5 H20 M11.5 8 H20 M9.5 11 H20" stroke="#c9ced9" stroke-width="1.4"/></svg>
<svg style="left:811px;top:479px" width="23" height="16" viewBox="0 0 23 16"><rect x="0.8" y="0.8" width="21.4" height="14.4" fill="none" stroke="#c9ced9" stroke-width="1.6"/><path d="M11.5 1 V15 M1 8 H22" stroke="#c9ced9" stroke-width="1.6"/></svg>
<svg style="left:866px;top:477px" width="25" height="18" viewBox="0 0 25 18"><circle cx="20" cy="2.3" r="2.3" fill="#c9ced9"/><path d="M17 4 L12 7.5 L15 11 L12.5 17 M15 11 L20 13 L21.5 17 M17 4 L19 9 L23 9 M13 7.5 L9.5 9" fill="none" stroke="#c9ced9" stroke-width="2.2" stroke-linejoin="round"/><path d="M0 4 H9 M1 7 H8 M0 10 H7" stroke="#c9ced9" stroke-width="1.4"/></svg>
<svg style="left:921px;top:477px" width="24" height="18" viewBox="0 0 24 18"><path d="M3 5 Q8 0 14 2 Q22 3 23 9 Q22 14 16 14 Q12 12 10 16 Q5 18 3 13 Q-1 9 3 5 Z" fill="none" stroke="#c9ced9" stroke-width="1.3"/><g fill="#c9ced9"><circle cx="3" cy="5" r="1.4"/><circle cx="14" cy="2" r="1.4"/><circle cx="23" cy="9" r="1.4"/><circle cx="16" cy="14" r="1.4"/><circle cx="10" cy="16" r="1.4"/><circle cx="1.5" cy="11" r="1.4"/><circle cx="8" cy="1.5" r="1.4"/><circle cx="20" cy="4" r="1.4"/></g></svg>
<svg style="left:971px;top:477px" width="22" height="17" viewBox="0 0 22 17"><path d="M0.8 5 V0.8 H5 M17 0.8 H21.2 V5 M21.2 12 V16.2 H17 M5 16.2 H0.8 V12" fill="none" stroke="#c9ced9" stroke-width="1.6"/><rect x="5.5" y="4.5" width="11" height="8" fill="none" stroke="#c9ced9" stroke-width="1" stroke-dasharray="1.5 1"/><path d="M11 6 V11 M8.5 8.5 H13.5" stroke="#c9ced9" stroke-width="1.2"/></svg>
<svg style="left:1024px;top:478px" width="26" height="16" viewBox="0 0 26 16"><path d="M0 0 H14 V3.5 H9 V15.5 H5 V3.5 H0 Z" fill="#c9ced9"/><text x="12" y="15.5" font-family="Liberation Sans" font-size="10" fill="#c9ced9" letter-spacing="-0.5">3D</text></svg>
<svg style="left:1087px;top:477px" width="24" height="18" viewBox="0 0 24 18"><path d="M0 0 H19 V7 L14 12 V16 H0 Z" fill="#e9ecf2"/><path d="M0 4 L9 11 L18 1" fill="none" stroke="#232a3e" stroke-width="1.8"/><path d="M13 17 L14 13 L21.5 5.5 L24 8 L16.5 15.5 Z" fill="#e9ecf2" stroke="#232a3e" stroke-width="0.8"/></svg>
<svg style="left:1138px;top:477px" width="24" height="18" viewBox="0 0 24 18"><rect x="0" y="1" width="23" height="16" fill="#c9ced9"/><g fill="#232a3e"><rect x="2" y="2" width="2" height="1.5"/><rect x="6" y="2" width="2" height="1.5"/><rect x="10" y="2" width="2" height="1.5"/><rect x="14" y="2" width="2" height="1.5"/><rect x="2" y="14.5" width="2" height="1.5"/><rect x="6" y="14.5" width="2" height="1.5"/><rect x="10" y="14.5" width="2" height="1.5"/><rect x="14" y="14.5" width="2" height="1.5"/><rect x="18" y="14.5" width="2" height="1.5"/></g><rect x="1.5" y="4.5" width="20" height="9" fill="#232a3e" opacity="0.35"/><rect x="4" y="4.5" width="3" height="9" fill="#8a90a0"/><path d="M8 14 L9 11 L20 0 L23 3 L12 14 Z" fill="#c9ced9" stroke="#232a3e" stroke-width="0.9"/></svg>

<!-- zoom controls -->
<svg style="left:1278px;top:477px" width="19" height="19" viewBox="0 0 19 19"><circle cx="7.5" cy="7.5" r="6.5" fill="none" stroke="#c9ced9" stroke-width="1.6"/><path d="M4.5 7.5 H10.5" stroke="#c9ced9" stroke-width="2"/><path d="M12 12 L18 18" stroke="#c9ced9" stroke-width="2.4"/></svg>
<div class="a" style="left:1307px;top:483px;width:72px;height:4px;background:#000"></div>
<svg style="left:1354px;top:481px" width="8" height="11" viewBox="0 0 8 11"><path d="M0 0 H8 V7 L4 11 L0 7 Z" fill="#c9ced9"/></svg>
<svg style="left:1392px;top:477px" width="19" height="19" viewBox="0 0 19 19"><circle cx="7.5" cy="7.5" r="6.5" fill="none" stroke="#c9ced9" stroke-width="1.6"/><path d="M4.5 7.5 H10.5 M7.5 4.5 V10.5" stroke="#c9ced9" stroke-width="2"/><path d="M12 12 L18 18" stroke="#c9ced9" stroke-width="2.4"/></svg>
<svg style="left:1427px;top:479px" width="16" height="14" viewBox="0 0 16 14"><rect x="0.7" y="0.7" width="14.6" height="12.6" fill="none" stroke="#c9ced9" stroke-width="1.4"/><path d="M4 7 H12" stroke="#c9ced9" stroke-width="1.3"/><path d="M3 7 L5.5 4.5 V9.5 Z M13 7 L10.5 4.5 V9.5 Z" fill="#c9ced9"/></svg>
<svg style="left:1461px;top:478px" width="16" height="16" viewBox="0 0 16 16"><circle cx="8" cy="8" r="7.8" fill="#c9ced9"/><path d="M7.5 3 V8.5 L11 12" fill="none" stroke="#232a3e" stroke-width="1.6"/></svg>
<div class="a" style="left:1486px;top:477px;width:102px;height:18px;background:#121623"></div>
<svg style="left:0;top:0" width="1600" height="868"><rect x="1496.30" y="480.50" width="5.20" height="9.60" rx="0.8" fill="none" stroke="#d8dce5" stroke-width="1.0"/><rect x="1512.40" y="480.50" width="5.20" height="9.60" rx="0.8" fill="none" stroke="#d8dce5" stroke-width="1.0"/><rect x="1520.30" y="480.50" width="5.20" height="9.60" rx="0.8" fill="none" stroke="#d8dce5" stroke-width="1.0"/><rect x="1536.40" y="480.50" width="5.20" height="9.60" rx="0.8" fill="none" stroke="#d8dce5" stroke-width="1.0"/><rect x="1544.30" y="480.50" width="5.20" height="9.60" rx="0.8" fill="none" stroke="#d8dce5" stroke-width="1.0"/><rect x="1506.00" y="482.50" width="2.00" height="2.00" fill="#d8dce5"/><rect x="1506.00" y="487.00" width="2.00" height="2.00" fill="#d8dce5"/><rect x="1530.00" y="482.50" width="2.00" height="2.00" fill="#d8dce5"/><rect x="1530.00" y="487.00" width="2.00" height="2.00" fill="#d8dce5"/><rect x="1553.40" y="484.40" width="1.20" height="1.20" fill="#d8dce5"/><rect x="1553.40" y="488.40" width="1.20" height="1.20" fill="#d8dce5"/><rect x="1557.50" y="482.50" width="3.70" height="7.60" rx="0.8" fill="none" stroke="#d8dce5" stroke-width="1.0"/><rect x="1565.00" y="482.50" width="3.70" height="7.60" rx="0.8" fill="none" stroke="#d8dce5" stroke-width="1.0"/><rect x="1572.50" y="482.50" width="3.70" height="7.60" rx="0.8" fill="none" stroke="#d8dce5" stroke-width="1.0"/></svg><div class="a" style="left:0;top:502px;width:1577px;height:36px;background:#181c28"></div>
<div class="a" style="left:0;top:501px;width:1600px;height:1px;background:#2a3147"></div>
<div class="a" style="left:199px;top:526px;width:1378px;height:11px;background:#222940"></div>
<div class="a" style="left:199px;top:525px;width:1378px;height:1px;background:#8a909c"></div>
<div class="a" style="left:199px;top:508px;width:1px;height:18px;background:#8a909c"></div>
<div class="a" style="left:274px;top:512px;width:1px;height:14px;background:#8a909c"></div>
<div class="t" style="left:200px;top:506px;font-size:14.5px;color:#b5bac6;letter-spacing:-0.2px">00:00:00:00</div>
<div class="a" style="left:349px;top:508px;width:1px;height:18px;background:#8a909c"></div>
<div class="a" style="left:424px;top:512px;width:1px;height:14px;background:#8a909c"></div>
<div class="t" style="left:350px;top:506px;font-size:14.5px;color:#b5bac6;letter-spacing:-0.2px">00:00:02:00</div>
<div class="a" style="left:499px;top:508px;width:1px;height:18px;background:#8a909c"></div>
<div class="a" style="left:574px;top:512px;width:1px;height:14px;background:#8a909c"></div>
<div class="t" style="left:500px;top:506px;font-size:14.5px;color:#b5bac6;letter-spacing:-0.2px">00:00:04:00</div>
<div class="a" style="left:649px;top:508px;width:1px;height:18px;background:#8a909c"></div>
<div class="a" style="left:724px;top:512px;width:1px;height:14px;background:#8a909c"></div>
<div class="t" style="left:650px;top:506px;font-size:14.5px;color:#b5bac6;letter-spacing:-0.2px">00:00:06:00</div>
<div class="a" style="left:799px;top:508px;width:1px;height:18px;background:#8a909c"></div>
<div class="a" style="left:874px;top:512px;width:1px;height:14px;background:#8a909c"></div>
<div class="t" style="left:800px;top:506px;font-size:14.5px;color:#b5bac6;letter-spacing:-0.2px">00:00:08:00</div>
<div class="a" style="left:949px;top:508px;width:1px;height:18px;background:#8a909c"></div>
<div class="a" style="left:1024px;top:512px;width:1px;height:14px;background:#8a909c"></div>
<div class="t" style="left:950px;top:506px;font-size:14.5px;color:#b5bac6;letter-spacing:-0.2px">00:00:10:00</div>
<div class="a" style="left:1099px;top:508px;width:1px;height:18px;background:#8a909c"></div>
<div class="a" style="left:1174px;top:512px;width:1px;height:14px;background:#8a909c"></div>
<div class="t" style="left:1100px;top:506px;font-size:14.5px;color:#b5bac6;letter-spacing:-0.2px">00:00:12:00</div>
<div class="a" style="left:1249px;top:508px;width:1px;height:18px;background:#8a909c"></div>
<div class="a" style="left:1324px;top:512px;width:1px;height:14px;background:#8a909c"></div>
<div class="t" style="left:1250px;top:506px;font-size:14.5px;color:#b5bac6;letter-spacing:-0.2px">00:00:14:00</div>
<div class="a" style="left:1399px;top:508px;width:1px;height:18px;background:#8a909c"></div>
<div class="a" style="left:1474px;top:512px;width:1px;height:14px;background:#8a909c"></div>
<div class="t" style="left:1400px;top:506px;font-size:14.5px;color:#b5bac6;letter-spacing:-0.2px">00:00:16:00</div>
<div class="a" style="left:1549px;top:508px;width:1px;height:18px;background:#8a909c"></div>
<div class="t" style="left:1550px;top:506px;font-size:14.5px;color:#b5bac6;letter-spacing:-0.2px">00:0</div>
<div class="a" style="left:1576px;top:502px;width:24px;height:36px;background:#232a3e"></div>

<svg style="left:24px;top:515px" width="20" height="12" viewBox="0 0 20 12"><path d="M2 0.5 H0.7 V11.5 H2" fill="none" stroke="#c9ced9" stroke-width="1"/><g fill="#c9ced9"><rect x="3.5" y="0" width="10" height="2.5"/><rect x="3.5" y="3.2" width="10" height="2.5"/><rect x="3.5" y="6.4" width="10" height="2.5"/><rect x="3.5" y="9.6" width="10" height="2.5"/></g><path d="M17 0 V5 M14.5 2.5 L17 5 L19.5 2.5 M17 12 V7 M14.5 9.5 L17 7 L19.5 9.5" fill="none" stroke="#c9ced9" stroke-width="1.2"/></svg>
<svg style="left:77px;top:514px" width="17" height="13" viewBox="0 0 17 13"><g fill="#c9ced9"><rect x="0" y="1" width="10" height="2.5"/><rect x="0" y="4.5" width="10" height="2.5"/><rect x="0" y="8" width="10" height="2.5"/><rect x="0" y="11" width="10" height="2"/></g><path d="M14 0 V5 M11.5 2.5 H16.5 M11.5 10 H16.5" stroke="#c9ced9" stroke-width="1.2"/></svg>
<svg style="left:119px;top:514px" width="20" height="12" viewBox="0 0 20 12"><path d="M0 11.5 L6.5 0.5 L13 11.5 Z" fill="#22d36a"/><path d="M15 3.5 H20 L17.5 6.5 Z" fill="#c9ced9"/></svg>
<svg style="left:193px;top:507px" width="9" height="14" viewBox="0 0 9 14"><path d="M0 0 H9 V10 L4.5 14 L0 10 Z" fill="#e8e0c8"/><path d="M6 0 V13" stroke="#b0a890" stroke-width="1"/></svg>
<div class="a" style="left:0;top:537px;width:1577px;height:298px;background:#161a26"></div>
<div class="a" style="left:0;top:538px;width:198px;height:297px;background:#232a3e"></div>
<div class="a" style="left:0;top:597px;width:198px;height:2px;background:#161a25"></div>
<div class="a" style="left:200px;top:598px;width:1376px;height:1px;background:#262c3b"></div>
<div class="a" style="left:0;top:659px;width:198px;height:2px;background:#161a25"></div>
<div class="a" style="left:200px;top:659px;width:1376px;height:1px;background:#262c3b"></div>
<div class="a" style="left:0;top:710px;width:198px;height:2px;background:#161a25"></div>
<div class="a" style="left:200px;top:710px;width:1376px;height:1px;background:#262c3b"></div>
<div class="a" style="left:0;top:761px;width:198px;height:2px;background:#161a25"></div>
<div class="a" style="left:200px;top:761px;width:1376px;height:1px;background:#262c3b"></div>
<div class="a" style="left:0;top:812px;width:198px;height:2px;background:#161a25"></div>
<div class="a" style="left:200px;top:812px;width:1376px;height:1px;background:#262c3b"></div>
<div class="a" style="left:0;top:835px;width:198px;height:2px;background:#161a25"></div>
<div class="a" style="left:50px;top:538px;width:1px;height:59px;background:#30374c"></div>
<div class="a" style="left:50px;top:599px;width:1px;height:60px;background:#30374c"></div>
<div class="a" style="left:50px;top:660px;width:1px;height:50px;background:#30374c"></div>
<div class="a" style="left:50px;top:711px;width:1px;height:50px;background:#30374c"></div>
<div class="a" style="left:50px;top:762px;width:1px;height:50px;background:#30374c"></div>
<div class="a" style="left:0;top:538px;width:1px;height:297px;background:#161a25"></div>
<div class="a" style="left:198px;top:537px;width:1px;height:298px;background:#161a25"></div>
<div class="a" style="left:199px;top:537px;width:1px;height:298px;background:#fff"></div>
<div class="a" style="left:200px;top:537px;width:2px;height:298px;background:#0e3478"></div>

<div class="a" style="left:1576px;top:537px;width:24px;height:298px;background:#232a3e"></div>
<div class="a" style="left:1584px;top:552px;width:16px;height:270px;background:#283048"></div>
<svg style="left:1584px;top:541px" width="9" height="6"><path d="M0 6 L4.5 0 L9 6 Z" fill="#56607a"/></svg>
<svg style="left:1584px;top:824px" width="9" height="6"><path d="M0 0 L4.5 6 L9 0 Z" fill="#56607a"/></svg>
<div class="t" style="left:59px;top:548px;font-size:16px;color:#d5d9e3">视频</div>
<div class="t" style="left:59px;top:609px;font-size:16px;color:#d5d9e3">叠加1</div>
<div class="t" style="left:59px;top:665px;font-size:16px;color:#d5d9e3">标题1</div>
<div class="t" style="left:59px;top:716px;font-size:16px;color:#d5d9e3">声音</div>
<div class="t" style="left:59px;top:767px;font-size:16px;color:#d5d9e3">音乐1</div>

<svg style="left:7px;top:562px" width="21" height="13" viewBox="0 0 21 13"><rect x="0" y="0" width="14.5" height="13" rx="2" fill="#c9ced9"/><path d="M15.5 5 L21 1 V12 L15.5 8 Z" fill="#c9ced9"/><path d="M5.5 3.5 L10 6.5 L5.5 9.5 Z" fill="#232a3e"/></svg>
<svg style="left:7px;top:623px" width="21" height="13" viewBox="0 0 21 13"><rect x="0" y="0" width="14.5" height="13" rx="2" fill="#c9ced9"/><path d="M15.5 5 L21 1 V12 L15.5 8 Z" fill="#c9ced9"/><text x="4.5" y="10.5" font-family="Liberation Sans" font-weight="bold" font-size="9.5" fill="#232a3e">1</text></svg>
<div class="t" style="left:7px;top:683px;font-size:8px;font-weight:bold;color:#c9ced9">1</div>
<svg style="left:12px;top:678px" width="11" height="12" viewBox="0 0 11 12"><path d="M0 0 H11 V2.6 H6.8 V12 H4.2 V2.6 H0 Z" fill="#c9ced9"/></svg>
<svg style="left:11px;top:731px" width="18" height="12" viewBox="0 0 18 12"><circle cx="3.3" cy="3.3" r="3.3" fill="#c9ced9"/><path d="M5 5 L11.5 9.5" stroke="#c9ced9" stroke-width="3.3"/><path d="M12 10.5 Q14 12 17.5 10" fill="none" stroke="#c9ced9" stroke-width="1"/></svg>
<div class="t" style="left:7px;top:785px;font-size:8px;font-weight:bold;color:#c9ced9">1</div>
<svg style="left:12px;top:781px" width="12" height="12" viewBox="0 0 12 12"><ellipse cx="2.6" cy="9.5" rx="2.6" ry="2.2" fill="#c9ced9"/><ellipse cx="9.4" cy="9.5" rx="2.6" ry="2.2" fill="#c9ced9"/><path d="M4.2 9.5 V1 H11 V9.5" fill="none" stroke="#c9ced9" stroke-width="1.5"/><rect x="4" y="0.5" width="7.5" height="2.3" fill="#c9ced9"/></svg>
<svg style="left:66px;top:572px" width="14" height="13" viewBox="0 0 14 13"><rect x="0.2" y="6.3" width="9.5" height="5" rx="2.5" fill="none" stroke="#c9ced9" stroke-width="1.5" transform="rotate(-45 4.95 8.8)"/><rect x="4.2" y="1.7" width="9.5" height="5" rx="2.5" fill="none" stroke="#232a3e" stroke-width="3" stroke-dasharray="6 30" stroke-dashoffset="-14" transform="rotate(-45 8.95 4.2)"/><rect x="4.2" y="1.7" width="9.5" height="5" rx="2.5" fill="none" stroke="#c9ced9" stroke-width="1.5" transform="rotate(-45 8.95 4.2)"/></svg>
<svg style="left:80px;top:581px" width="7" height="5"><path d="M0 0 H7 L3.5 4.5 Z" fill="#c9ced9"/></svg>
<svg style="left:112px;top:572px" width="17" height="13" viewBox="0 0 17 13"><path d="M0 4 H3.5 L8.5 0 V13 L3.5 9 H0 Z" fill="#c9ced9"/><g fill="none" stroke="#c9ced9" stroke-width="1.6"><path d="M10.5 4 Q12 6.5 10.5 9"/><path d="M13 2 Q16 6.5 13 11"/></g></svg>
<svg style="left:162px;top:572px" width="12" height="12" viewBox="0 0 12 12"><rect width="12" height="12" fill="#3a4258"/><rect x="0" y="0" width="3" height="3" fill="#d0d4de"/><rect x="0" y="6" width="3" height="3" fill="#d0d4de"/><rect x="3" y="3" width="3" height="3" fill="#d0d4de"/><rect x="3" y="9" width="3" height="3" fill="#d0d4de"/><rect x="6" y="0" width="3" height="3" fill="#d0d4de"/><rect x="6" y="6" width="3" height="3" fill="#d0d4de"/><rect x="9" y="3" width="3" height="3" fill="#d0d4de"/><rect x="9" y="9" width="3" height="3" fill="#d0d4de"/></svg>
<svg style="left:66px;top:633px" width="14" height="13" viewBox="0 0 14 13"><rect x="0.2" y="6.3" width="9.5" height="5" rx="2.5" fill="none" stroke="#4e5874" stroke-width="1.5" transform="rotate(-45 4.95 8.8)"/><rect x="4.2" y="1.7" width="9.5" height="5" rx="2.5" fill="none" stroke="#232a3e" stroke-width="3" stroke-dasharray="6 30" stroke-dashoffset="-14" transform="rotate(-45 8.95 4.2)"/><rect x="4.2" y="1.7" width="9.5" height="5" rx="2.5" fill="none" stroke="#4e5874" stroke-width="1.5" transform="rotate(-45 8.95 4.2)"/></svg>
<svg style="left:112px;top:633px" width="17" height="13" viewBox="0 0 17 13"><path d="M0 4 H3.5 L8.5 0 V13 L3.5 9 H0 Z" fill="#c9ced9"/><g fill="none" stroke="#c9ced9" stroke-width="1.6"><path d="M10.5 4 Q12 6.5 10.5 9"/><path d="M13 2 Q16 6.5 13 11"/></g></svg>
<svg style="left:162px;top:631px" width="12" height="12" viewBox="0 0 12 12"><rect width="12" height="12" fill="#3a4258"/><rect x="0" y="0" width="3" height="3" fill="#d0d4de"/><rect x="0" y="6" width="3" height="3" fill="#d0d4de"/><rect x="3" y="3" width="3" height="3" fill="#d0d4de"/><rect x="3" y="9" width="3" height="3" fill="#d0d4de"/><rect x="6" y="0" width="3" height="3" fill="#d0d4de"/><rect x="6" y="6" width="3" height="3" fill="#d0d4de"/><rect x="9" y="3" width="3" height="3" fill="#d0d4de"/><rect x="9" y="9" width="3" height="3" fill="#d0d4de"/></svg>
<svg style="left:66px;top:688px" width="14" height="13" viewBox="0 0 14 13"><rect x="0.2" y="6.3" width="9.5" height="5" rx="2.5" fill="none" stroke="#4e5874" stroke-width="1.5" transform="rotate(-45 4.95 8.8)"/><rect x="4.2" y="1.7" width="9.5" height="5" rx="2.5" fill="none" stroke="#232a3e" stroke-width="3" stroke-dasharray="6 30" stroke-dashoffset="-14" transform="rotate(-45 8.95 4.2)"/><rect x="4.2" y="1.7" width="9.5" height="5" rx="2.5" fill="none" stroke="#4e5874" stroke-width="1.5" transform="rotate(-45 8.95 4.2)"/></svg>
<svg style="left:66px;top:740px" width="14" height="13" viewBox="0 0 14 13"><rect x="0.2" y="6.3" width="9.5" height="5" rx="2.5" fill="none" stroke="#4e5874" stroke-width="1.5" transform="rotate(-45 4.95 8.8)"/><rect x="4.2" y="1.7" width="9.5" height="5" rx="2.5" fill="none" stroke="#232a3e" stroke-width="3" stroke-dasharray="6 30" stroke-dashoffset="-14" transform="rotate(-45 8.95 4.2)"/><rect x="4.2" y="1.7" width="9.5" height="5" rx="2.5" fill="none" stroke="#4e5874" stroke-width="1.5" transform="rotate(-45 8.95 4.2)"/></svg>
<svg style="left:112px;top:739px" width="17" height="13" viewBox="0 0 17 13"><path d="M0 4 H3.5 L8.5 0 V13 L3.5 9 H0 Z" fill="#c9ced9"/><g fill="none" stroke="#c9ced9" stroke-width="1.6"><path d="M10.5 4 Q12 6.5 10.5 9"/><path d="M13 2 Q16 6.5 13 11"/></g></svg>
<svg style="left:162px;top:743px" width="15" height="8" viewBox="0 0 15 8"><path d="M0 1 H2.5 L5 6.3 H10 L12.5 1 H15" fill="none" stroke="#c9ced9" stroke-width="1.9"/></svg>
<svg style="left:66px;top:791px" width="14" height="13" viewBox="0 0 14 13"><rect x="0.2" y="6.3" width="9.5" height="5" rx="2.5" fill="none" stroke="#4e5874" stroke-width="1.5" transform="rotate(-45 4.95 8.8)"/><rect x="4.2" y="1.7" width="9.5" height="5" rx="2.5" fill="none" stroke="#232a3e" stroke-width="3" stroke-dasharray="6 30" stroke-dashoffset="-14" transform="rotate(-45 8.95 4.2)"/><rect x="4.2" y="1.7" width="9.5" height="5" rx="2.5" fill="none" stroke="#4e5874" stroke-width="1.5" transform="rotate(-45 8.95 4.2)"/></svg>
<svg style="left:112px;top:791px" width="17" height="13" viewBox="0 0 17 13"><path d="M0 4 H3.5 L8.5 0 V13 L3.5 9 H0 Z" fill="#c9ced9"/><g fill="none" stroke="#c9ced9" stroke-width="1.6"><path d="M10.5 4 Q12 6.5 10.5 9"/><path d="M13 2 Q16 6.5 13 11"/></g></svg>
<svg style="left:162px;top:795px" width="15" height="8" viewBox="0 0 15 8"><path d="M0 1 H2.5 L5 6.3 H10 L12.5 1 H15" fill="none" stroke="#c9ced9" stroke-width="1.9"/></svg>

<div class="a" style="left:1123px;top:503px;width:1px;height:22px;background:#e8e8e8"></div>
<div class="a" style="left:1107px;top:528px;width:123px;height:31px;background:#151925;border:1px solid #474e60;border-radius:5px"></div>
<svg style="left:1107px;top:515px" width="20" height="16" viewBox="0 0 20 16"><path d="M5 15 L4 1 L15 14" fill="#151925" stroke="#474e60" stroke-width="1"/><rect x="4.5" y="13" width="12" height="4" fill="#151925"/></svg>
<div class="t" style="left:1113px;top:537px;font-size:15.5px;color:#d8dce5">分屏模板创建器</div>
<div class="a" style="left:1095px;top:522px;width:159px;height:44px;border:3px solid #e01818"></div>
<div class="a" style="left:1073px;top:463px;width:51px;height:43px;border:3px solid #e01818"></div>
<!-- bottom bar -->
<div class="a" style="left:0;top:836px;width:1600px;height:24px;background:#232a40"></div>
<div class="a" style="left:0;top:835px;width:199px;height:1px;background:#10131c"></div>
<div class="a" style="left:83px;top:841px;width:25px;height:13px;background:#1d3a68;border-radius:2px"></div>
<svg style="left:86px;top:843px" width="20" height="9" viewBox="0 0 20 9"><path d="M0 6 H5 M2.5 3.5 V8.5" stroke="#2d9df0" stroke-width="1.3"/><path d="M7 4 V8 H17 V4 M10 8 V5 M13.5 8 V5" fill="none" stroke="#2d9df0" stroke-width="1.3"/><path d="M14 0 H20 L17 3 Z" fill="#2d9df0"/></svg>
<svg style="left:121px;top:844px" width="7" height="10"><path d="M6.5 0 V9.5 L0 4.75 Z" fill="#c9ced9"/></svg>
<svg style="left:143px;top:844px" width="7" height="10"><path d="M0 0 V9.5 L6.5 4.75 Z" fill="#c9ced9"/></svg>


<div class="t" style="left:1278px;top:800px;font-size:40px;font-weight:900;-webkit-text-stroke:1px #fff;color:#fff;text-shadow:2px 2px 0 #000,1px 1px 2px #000,-1px -1px 0 rgba(0,0,0,.5)">头条</div>
<div class="t" style="left:1367px;top:800px;font-size:41px;color:#fff;text-shadow:2px 2px 0 #000,1px 1px 2px #000,-1px -1px 0 rgba(0,0,0,.5);letter-spacing:-0.5px">@极速手助</div>
<!-- IME sticker -->
<div class="a" style="left:1390px;top:663px;width:206px;height:71px;background:#a6cf6c;border:3px solid #fff;border-radius:18px"></div>
<svg style="left:1390px;top:620px" width="210" height="118" viewBox="0 0 210 118">
 <text x="16" y="77" font-family="Liberation Sans" font-size="18" fill="#f4fbe8">中</text>
 <circle cx="20" cy="95" r="2.2" fill="#fff"/><path d="M20 95 Q19 100 16 101" stroke="#fff" stroke-width="1.6" fill="none"/><circle cx="26" cy="99" r="2.8" fill="none" stroke="#fff" stroke-width="1.4"/>
 <path d="M40 92 L44 89 H50 L54 92 L52 95 L51 94 V103 H43 V94 L42 95 Z" fill="#fff"/>
 <path d="M68 105 L71 102 L74 105 L71 108 Z M78 105 L81 102 L84 105 L81 108 Z" fill="#fff" opacity="0.9"/>
 
 <g stroke="#3c2a10" stroke-width="1.3" fill="#3c2a10"><path d="M14 79 v0"/><circle cx="13.5" cy="80" r="1.3"/><path d="M15 80 V75"/>
 <circle cx="39" cy="83" r="1.3"/><path d="M40 83 V78"/><circle cx="70" cy="90" r="1.5"/><circle cx="76" cy="89" r="1.5"/><path d="M71.5 90 V84 L77.5 83 V89"/>
 <circle cx="92" cy="85" r="1.5"/><path d="M93.5 85 V79 L98 78 V84"/><circle cx="96" cy="84" r="1.5"/>
 <circle cx="107" cy="67" r="1.5"/><path d="M108 67 V62"/><circle cx="188" cy="63" r="1.4"/><path d="M189 63 V58"/></g>
 <path d="M178 80 Q182 74 186 80 Q190 74 194 80" stroke="#6aa050" stroke-width="1.5" fill="none"/>
 <path d="M176 92 l4 -3 l4 3 l-4 3 Z M186 100 l4 -3 l4 3 l-4 3 Z" fill="#fff"/>
 <ellipse cx="72" cy="56" rx="23" ry="8" fill="#e08a55"/>
 <path d="M49 56 V70 Q72 84 95 70 V56 Q72 66 49 56 Z" fill="#c8643a"/>
 <ellipse cx="72" cy="56" rx="23" ry="8" fill="#e08a55"/><ellipse cx="72" cy="56" rx="14" ry="4.5" fill="none" stroke="#c8704a" stroke-width="1"/><ellipse cx="72" cy="56" rx="7" ry="2.3" fill="none" stroke="#c8704a" stroke-width="1"/>
 <ellipse cx="66" cy="49" rx="12" ry="8" fill="#f6f2f0"/><circle cx="61" cy="48" r="1" fill="#6a4a4a"/><circle cx="67" cy="48" r="1" fill="#6a4a4a"/><ellipse cx="56" cy="46" rx="4" ry="3" fill="#e89aa4"/>
 <ellipse cx="92" cy="35" rx="5" ry="3.2" fill="#e88a8a"/><rect x="91" y="36" width="2.2" height="4" fill="#f4e0d0"/>
 <ellipse cx="101" cy="43" rx="4" ry="2.7" fill="#d890b0"/>
 <ellipse cx="120" cy="104" rx="24" ry="7" fill="#8cbc56"/>
 <ellipse cx="108" cy="98" rx="16" ry="13" fill="#fff"/><path d="M100 95 Q106 92 110 99 M104 100 Q110 96 116 101" stroke="#b06060" stroke-width="1" fill="none"/>
 <ellipse cx="121" cy="96" rx="7" ry="6" fill="#e4f0d8" stroke="#cfe6b8" stroke-width="1"/>
 <ellipse cx="132.7" cy="52" rx="36.5" ry="34" fill="#fff"/><path d="M114 76 Q116 92 122 96 Q128 98 134 94 Q140 98 146 96 Q152 92 152 76 Z" fill="#fff"/>
 <path d="M134 18 L131 10" stroke="#8cc84a" stroke-width="1.5"/><ellipse cx="126" cy="11" rx="5" ry="3" fill="#b4e070" transform="rotate(25 126 11)"/><ellipse cx="133" cy="6" rx="3" ry="4.5" fill="#b4e070" transform="rotate(-10 133 6)"/>
 <circle cx="125" cy="40" r="3.2" fill="#8a3a1a"/><circle cx="145" cy="38" r="3.2" fill="#8a3a1a"/>
 <path d="M131 39 Q133 43 135 40 Q137 43 139 39" stroke="#6a3a2a" stroke-width="1.1" fill="none"/>
 <ellipse cx="119" cy="45" rx="5" ry="3" fill="#f8c8c8"/><ellipse cx="152" cy="43" rx="5" ry="3" fill="#f8c8c8"/>
 <path d="M130 69 Q134 63 137 69 M139 69 Q143 63 146 69" stroke="#d8d8e0" stroke-width="1" fill="none"/>
 <circle cx="161" cy="79" r="9.5" fill="#dceccc" stroke="#eef6e4" stroke-width="1.2" opacity="0.9"/><path d="M157 76 Q161 72 165 76" stroke="#a8c8e8" stroke-width="1.5" fill="none"/>
 <ellipse cx="179" cy="111" rx="7" ry="4" fill="#d8ecc8" opacity="0.8"/>
</svg>
<!-- ===== TASKBAR ===== -->
<div class="a" style="left:0;top:860px;width:1600px;height:8px;background:linear-gradient(90deg,#2a64a0 0%,#3a84c4 30%,#4a9ad8 45%,#3e8ccc 66%,#9ccaf0 68.5%,#3a86c8 70%,#2262a0 76%,#1c5490 100%)"></div>
<div class="a" style="left:0;top:860px;width:1600px;height:1px;background:#7aa6cc"></div>
<div class="a" style="left:14px;top:862px;width:28px;height:12px;border-radius:50%;background:#d8e4ee;border:1px solid #5a7a9a"></div>
<div class="a" style="left:60px;top:861px;width:58px;height:7px;background:linear-gradient(180deg,#c8e0f0,#8ec0e6);border:1px solid #6a9ac0;border-bottom:none;border-radius:2px 2px 0 0"></div>
<div class="a" style="left:122px;top:861px;width:50px;height:7px;background:linear-gradient(180deg,#c8e0f0,#8ec0e6);border:1px solid #6a9ac0;border-bottom:none;border-radius:2px 2px 0 0"></div>
<div class="a" style="left:184px;top:861px;width:58px;height:7px;background:linear-gradient(180deg,#c8e0f0,#8ec0e6);border:1px solid #6a9ac0;border-bottom:none;border-radius:2px 2px 0 0"></div>
<div class="a" style="left:246px;top:861px;width:57px;height:7px;background:linear-gradient(180deg,#c8e0f0,#8ec0e6);border:1px solid #6a9ac0;border-bottom:none;border-radius:2px 2px 0 0"></div>
<div class="a" style="left:308px;top:861px;width:58px;height:7px;background:linear-gradient(180deg,#c8e0f0,#8ec0e6);border:1px solid #6a9ac0;border-bottom:none;border-radius:2px 2px 0 0"></div>
<div class="a" style="left:370px;top:861px;width:58px;height:7px;background:linear-gradient(180deg,#c8e0f0,#8ec0e6);border:1px solid #6a9ac0;border-bottom:none;border-radius:2px 2px 0 0"></div>
<div class="a" style="left:432px;top:861px;width:58px;height:7px;background:linear-gradient(180deg,#eef4f8,#cfe2f0);border:1px solid #8ab0d0;border-bottom:none;border-radius:2px 2px 0 0"></div>
<div class="a" style="left:446px;top:864px;width:30px;height:4px;background:repeating-linear-gradient(90deg,#111 0 4px,#eee 4px 6px)"></div>
<div class="a" style="left:1586px;top:861px;width:14px;height:7px;background:#8aa6c2;border:1px solid #c0d4e4"></div>
<div class="t" style="left:1533px;top:864px;font-size:10px;font-weight:bold;color:#fff">12:00</div>
</body></html>
